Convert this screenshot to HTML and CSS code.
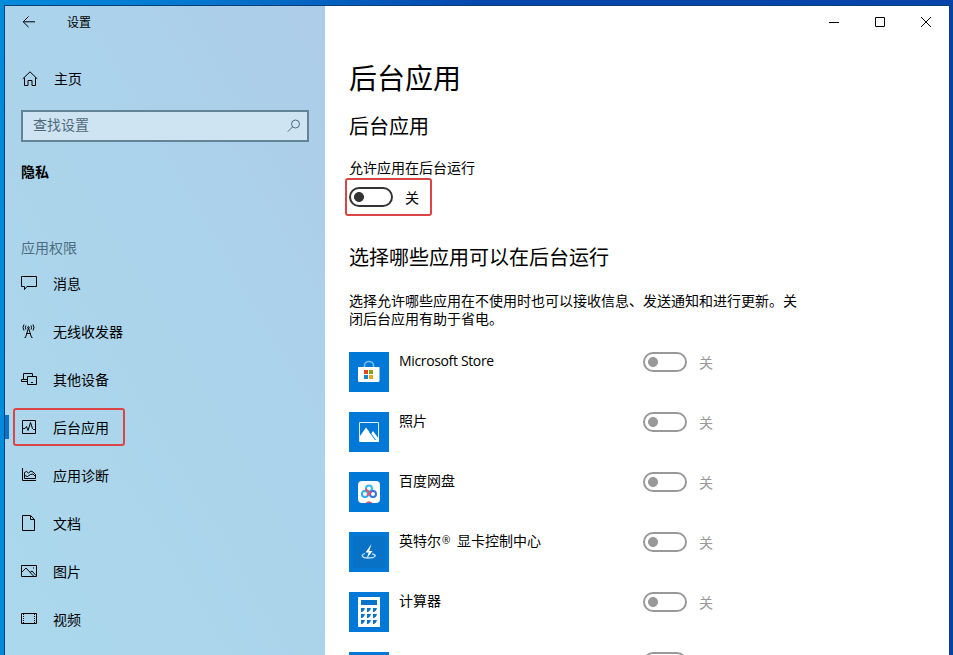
FILE: index.html
```
<!DOCTYPE html>
<html lang="zh-CN">
<head>
<meta charset="utf-8">
<title>设置</title>
<link rel="stylesheet" href="styles.css">
</head>
<body>
<div class="window">
  <aside class="sidebar">
    <header class="titlebar">
      <svg class="back" width="14" height="12" viewBox="0 0 14 12"><path d="M6.500.5L1.200 5.800l5.300 5.300M1.200 5.800H13"/></svg>
      <span>设置</span>
    </header>
    <a class="nav-item home">
      <svg width="16" height="16" viewBox="0 0 16 16"><path d="M.8 7.800L8 .8l7.200 7M2.500 6.500v8H6v-5h4v5h3.500v-8"/></svg>
      <span>主页</span>
    </a>
    <div class="search">
      <span>查找设置</span>
      <svg width="14" height="14" viewBox="0 0 14 14"><circle cx="8.500" cy="5" r="4"/><path d="M5.600 7.900L.8 12.700"/></svg>
    </div>
    <h4 class="section">隐私</h4>
    <p class="group">应用权限</p>
    <nav>
      <a class="nav-item">
        <svg width="16" height="16" viewBox="0 0 16 16"><path d="M.5 1.500h15v10H6l-2.500 3v-3h-3z"/></svg>
        <span>消息</span>
      </a>
      <a class="nav-item">
        <svg width="16" height="16" viewBox="0 0 16 16"><path d="M7.500 5L4.500 14.500M7.500 5l3 9.500M5.500 10.500h4M4.500 14.500h-1M10.500 14.500h1M5 2.500q-1.200 2 0 4M10 2.500q1.200 2 0 4M3 1.500q-2 3 0 6M12 1.500q2 3 0 6"/><circle cx="7.500" cy="4.500" r=".8"/></svg>
        <span>无线收发器</span>
      </a>
      <a class="nav-item">
        <svg width="16" height="16" viewBox="0 0 16 16"><path d="M6 10.500H.5v-2h2v-6h9v3M6.500 5.500h9v8h-9zM10 11.500h2M2.500 8.500h4"/></svg>
        <span>其他设备</span>
      </a>
      <a class="nav-item active">
        <svg width="16" height="16" viewBox="0 0 16 16"><path d="M1.500 1.500h13v13h-13zM2 9.500h2l1.500-2 1.500 4 2.500-8 2 6 1 1H14"/></svg>
        <span>后台应用</span>
      </a>
      <a class="nav-item">
        <svg width="16" height="16" viewBox="0 0 16 16"><path d="M1.500 1v12.500H15M3.500 11.500v-6l2-1 2 1.500 2.500-2 2 1 2.500 2.500v4zM3.500 8.500l3 1 3-2 2.500-.5 2 2"/></svg>
        <span>应用诊断</span>
      </a>
      <a class="nav-item">
        <svg width="16" height="16" viewBox="0 0 16 16"><path d="M1.500.5h8l4 4v11h-12zM9.500.5v4h4"/></svg>
        <span>文档</span>
      </a>
      <a class="nav-item">
        <svg width="16" height="16" viewBox="0 0 16 16"><path d="M.5 2.500h15v11H.5zM1 9l4-4 7.500 8M9 9.500L11 8l4 4.500M12 5h1"/></svg>
        <span>图片</span>
      </a>
      <a class="nav-item">
        <svg width="16" height="16" viewBox="0 0 16 16"><path d="M.5 2.500h15v10H.5z"/><path stroke-dasharray="1 1" d="M2.500 3v9M13.500 3v9"/></svg>
        <span>视频</span>
      </a>
    </nav>
  </aside>

  <main class="content">
    <div class="controls">
      <svg width="10" height="10" viewBox="0 0 10 10"><path d="M0 5.500h10"/></svg>
      <svg width="10" height="10" viewBox="0 0 10 10"><path d="M.5.5h9v9h-9z"/></svg>
      <svg width="10" height="10" viewBox="0 0 10 10"><path d="M0 0l10 10M10 0L0 10"/></svg>
    </div>
    <h1>后台应用</h1>
    <h2>后台应用</h2>
    <p class="label">允许应用在后台运行</p>
    <div class="master"><i class="toggle"></i><span>关</span></div>
    <h2 class="choose">选择哪些应用可以在后台运行</h2>
    <p class="note">选择允许哪些应用在不使用时也可以接收信息、发送通知和进行更新。关闭后台应用有助于省电。</p>
    <ul class="apps">
      <li>
        <svg class="tile" viewBox="0 0 40 40"><path class="store-handle" d="M15.500 15v-1.500a4.500 4 0 0 1 9 0V15"/><path class="white" d="M9 15h21.500v13.500a1.500 1.500 0 0 1-1.500 1.500H10.500A1.500 1.500 0 0 1 9 28.500z"/><path fill="#e0451f" d="M15 18h4v4h-4z"/><path fill="#7fa51c" d="M20 18h4v4h-4z"/><path fill="#1686c9" d="M15 23h4v4h-4z"/><path fill="#eca519" d="M20 23h4v4h-4z"/></svg>
        <span class="name latin">Microsoft Store</span><i class="toggle"></i><span class="state">关</span>
      </li>
      <li>
        <svg class="tile" viewBox="0 0 40 40"><path class="frame" d="M10.500 10.500h19v19h-19z"/><path class="white" d="M11 24l6-8.500 5 6.500 2-3 6 8v3H11z"/><path class="cut" d="M20.500 20l6 8"/></svg>
        <span class="name">照片</span><i class="toggle"></i><span class="state">关</span>
      </li>
      <li>
        <svg class="tile" viewBox="0 0 40 40"><rect class="white" x="9" y="9" width="22" height="22" rx="4"/><g class="rings"><circle cx="20" cy="16.500" r="3" stroke="#35b7ed"/><circle cx="16" cy="22" r="3" stroke="#2caeea"/><circle cx="24" cy="22" r="3" stroke="#3474df"/><path stroke="#e85166" d="M17 16.500a3 3 0 0 0 3 3M18.200 23.800l4-4"/></g><path fill="#e85166" d="M16.500 31q3.500-3.500 7 0z"/></svg>
        <span class="name">百度网盘</span><i class="toggle"></i><span class="state">关</span>
      </li>
      <li>
        <svg class="tile" viewBox="0 0 40 40"><path fill="#0872c7" d="M4 4h32v32H4z"/><path class="white" d="M22.500 12l-6 8.500h3.200L17.500 27l6-8h-3.200z"/><path class="orbit" d="M16 21.500c-5 1.500-3 4.500 3 4.500 7 0 10-3 4-4.200"/></svg>
        <span class="name">英特尔<small>®</small> 显卡控制中心</span><i class="toggle"></i><span class="state">关</span>
      </li>
      <li>
        <svg class="tile" viewBox="0 0 40 40"><path class="white" d="M9 5h22v30H9z"/><path class="blue" d="M12 8h16v5H12zM12 16h4l-1 2.500-2 1.500h-1zM18 16h4l-1 2.500-2 1.500h-1zM24 16h4l-1 2.500-2 1.500h-1zM12 22h4l-1 2.500-2 1.500h-1zM18 22h4l-1 2.500-2 1.500h-1zM24 22h4l-1 2.500-2 1.500h-1zM12 28h4l-1 2.500-2 1.500h-1zM18 28h4l-1 2.500-2 1.500h-1zM24 28h4l-1 2.500-2 1.500h-1z"/></svg>
        <span class="name">计算器</span><i class="toggle"></i><span class="state">关</span>
      </li>
      <li>
        <svg class="tile" viewBox="0 0 40 40"></svg>
        <span class="name"></span><i class="toggle"></i>
      </li>
    </ul>
  </main>
</div>
</body>
</html>
```
FILE: styles.css
```
*, *::before, *::after { box-sizing: border-box; }
body {
  margin: 0;
  height: 655px;
  overflow: hidden;
  padding: 6px 4px 0 5px;
  background: linear-gradient(90deg, #008bdc 0, #0377d0 200px, #0547ad 480px, #0643a8 100%);
  color: #000;
  font: 14px/20px "Open Sans", "Noto Sans CJK SC", sans-serif;
}
h1, h2, h4, p, ul { margin: 0; padding: 0; font-weight: 400; }
svg { display: block; flex: none; fill: none; stroke: #000; }
.window {
  display: flex;
  height: 649px;
  overflow: hidden;
  background: #fff;
  box-shadow: 0 0 0 1px #0a3f78;
}
.sidebar {
  flex: none;
  width: 320px;
  background: linear-gradient(60deg, #abd8ec 0%, #abd3eb 60%, #adcce7 100%);
}
.titlebar {
  display: flex;
  align-items: center;
  height: 32px;
  padding-left: 17px;
  gap: 31px;
  font-size: 12px;
}
.titlebar span { margin-top: 2px; }
.nav-item {
  position: relative;
  display: flex;
  align-items: center;
  height: 48px;
  padding-left: 16px;
  gap: 16px;
}
.nav-item svg { margin-top: -2px; }
.home { margin-top: 17px; padding-left: 17px; }
.home svg { margin-top: 0; }
.search {
  display: flex;
  align-items: center;
  justify-content: space-between;
  width: 288px;
  height: 32px;
  margin: 7px 0 0 16px;
  padding: 0 6px 2px 10px;
  border: 2px solid #638397;
  background: #cee4f3;
  color: #50687a;
}
.search svg { margin-top: 2px; stroke: #506b80; }
.section { margin: 20px 0 0 16px; font-weight: 700; }
.group { margin: 56px 0 0 16px; color: #4e6d80; }
nav { margin-top: 2px; }
.active::before {
  content: "";
  position: absolute;
  left: 0;
  top: 11px;
  width: 4px;
  height: 24px;
  background: #0874c9;
}
.active::after {
  content: "";
  position: absolute;
  left: 8px;
  top: 4px;
  width: 112px;
  height: 38px;
  border: 2px solid #dc4546;
  border-radius: 3px;
}
.content { flex: 1; padding-left: 24px; }
.controls {
  display: flex;
  justify-content: flex-end;
  align-items: center;
  height: 32px;
  padding-right: 18px;
  gap: 36px;
}
h1 { margin-top: 20px; font-size: 28px; line-height: 40px; }
h2 { margin-top: 15px; font-size: 20px; line-height: 28px; }
.label { margin-top: 17px; }
.master {
  display: flex;
  align-items: center;
  width: 87px;
  height: 38px;
  margin: 0 0 0 -4px;
  padding-left: 2px;
  gap: 12px;
  border: 2px solid #dc4546;
  border-radius: 3px;
}
.master span { margin-top: 2px; }
.toggle {
  flex: none;
  width: 44px;
  height: 20px;
  border: 2px solid #333;
  border-radius: 10px;
  background: radial-gradient(circle at 8px 8px, #333 4.600px, transparent 5.300px);
}
.choose { margin-top: 28px; }
.note { width: 454px; margin-top: 20px; line-height: 18px; }
.apps { margin-top: 24px; list-style: none; }
.apps li { display: flex; height: 60px; }
.tile { width: 40px; height: 40px; background: #0078d7; stroke: none; }
.name { width: 244px; margin: -1px 10px 0 0; padding-left: 10px; flex: none; white-space: pre; }
.latin { letter-spacing: -.35px; }
.name small { font-size: 10px; vertical-align: 2px; line-height: 1; margin: 0 2px 0 1px; }
.name small { margin-right: 3px; }
.apps .toggle {
  border-color: #999;
  background: radial-gradient(circle at 8px 8px, #999 4.600px, transparent 5.300px);
}
.state { margin: 1px 0 0 12px; color: #999; }
.white { fill: #fff; }
.blue { fill: #0873c8; }
.store-handle { stroke: #78bfed; stroke-width: 1.600; }
.frame { stroke: #dceefa; }
.cut { stroke: #0078d7; }
.rings { stroke-width: 2; }
.orbit { stroke: #c8e5f8; stroke-width: 1.300; }
```
